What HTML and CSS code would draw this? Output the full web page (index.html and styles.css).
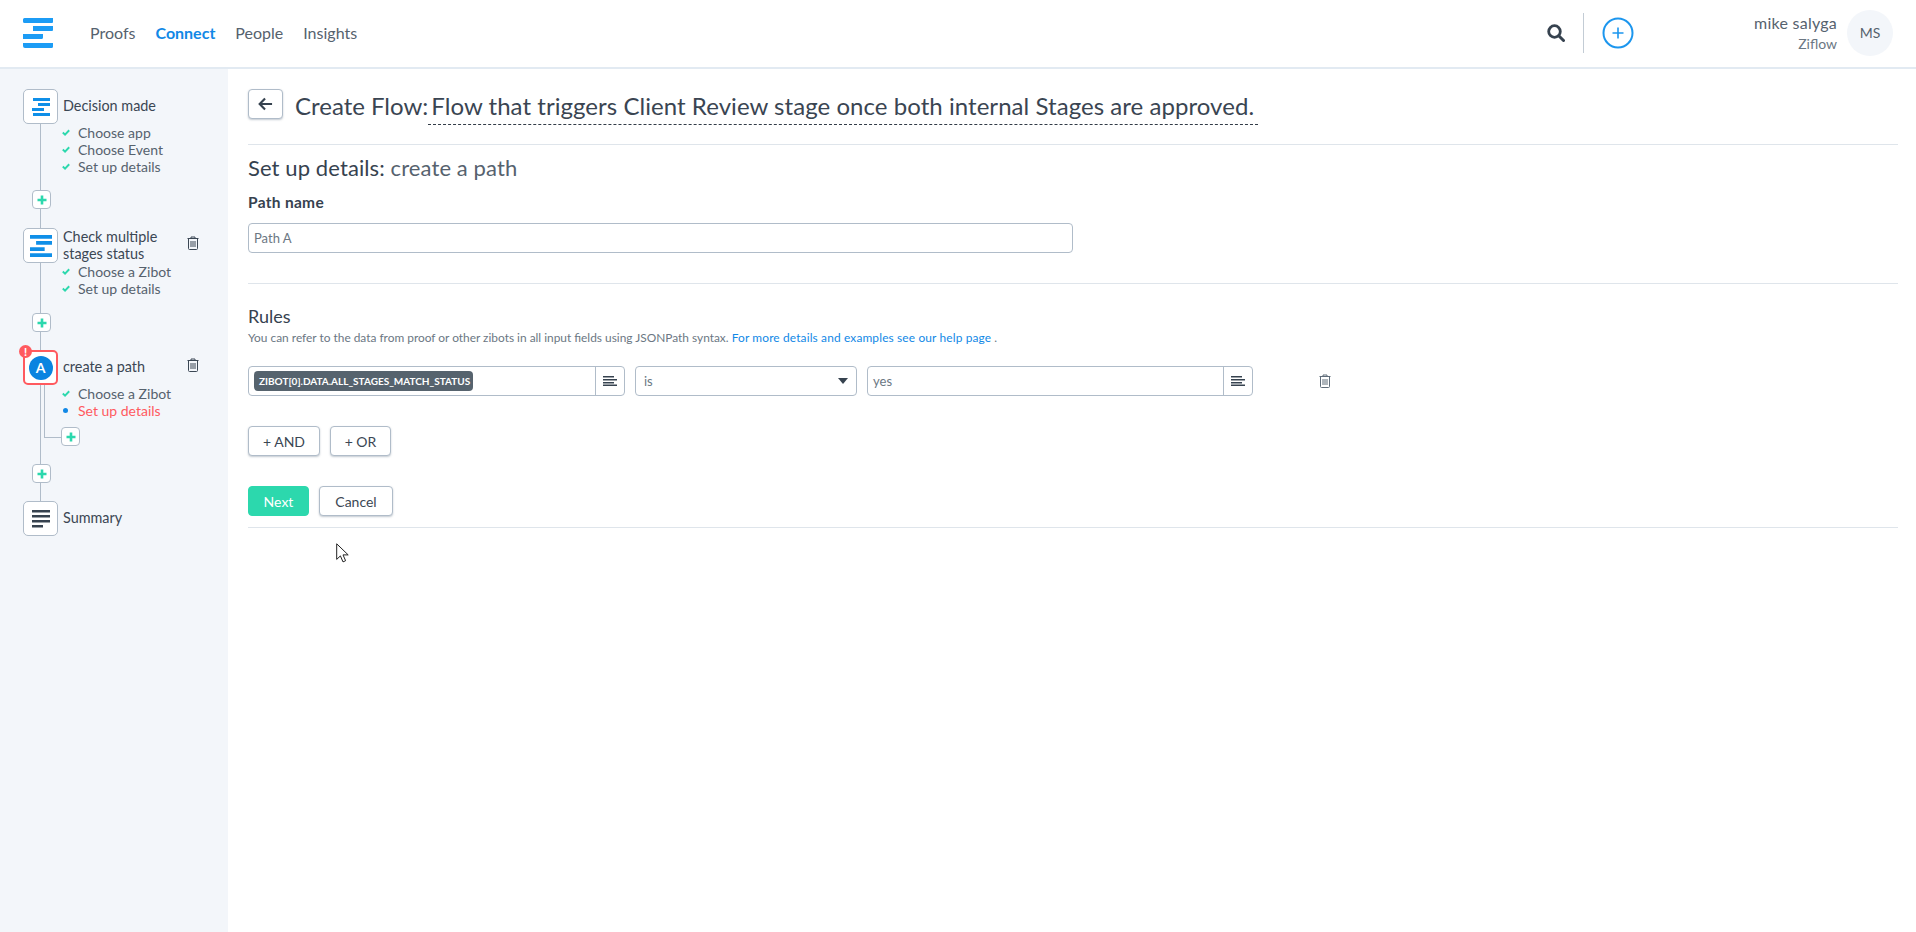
FILE: index.html
```html
<!DOCTYPE html>
<html lang="en">
<head>
<meta charset="utf-8">
<title>Create Flow</title>
<link rel="stylesheet" href="styles.css">
</head>
<body>
<header class="topbar">
  <svg class="logo" viewBox="0 0 30 30" aria-label="Ziflow"><path d="M0 1.500A1.500 1.500 0 0 1 1.500 0H30v4a1 1 0 0 1-1 1H1.500A1.500 1.500 0 0 1 0 3.500zM10 8h20v4a1 1 0 0 1-1 1H10zM0 16h20v3.500a1.500 1.500 0 0 1-1.500 1.500H0zM0 25h30v3.500a1.500 1.500 0 0 1-1.500 1.500H2a2 2 0 0 1-2-2z" fill="#1c9cf5"/></svg>
  <nav class="nav">
    <a class="nav-link">Proofs</a>
    <a class="nav-link active">Connect</a>
    <a class="nav-link">People</a>
    <a class="nav-link">Insights</a>
  </nav>
  <div class="top-actions">
    <svg class="search" viewBox="0 0 18 18"><circle cx="7.500" cy="7.500" r="5.800" fill="none" stroke="#36424f" stroke-width="2.800"/><path d="M12 12l4.500 4.500" stroke="#36424f" stroke-width="3" stroke-linecap="round"/></svg>
    <span class="vsep"></span>
    <svg class="add-circle" viewBox="0 0 32 32"><circle cx="16" cy="16" r="14.500" fill="none" stroke="#1c96ee" stroke-width="2"/><path d="M16 10.500v11M10.500 16h11" stroke="#1c96ee" stroke-width="1.600"/></svg>
    <div class="user">
      <div class="user-name">mike salyga</div>
      <div class="user-org">Ziflow</div>
    </div>
    <div class="avatar">MS</div>
  </div>
</header>

<div class="page">
  <aside class="sidebar">
    <div class="flow">
      <section class="step">
        <div class="step-head">
          <span class="node"><svg class="node-logo" viewBox="0 0 18 18"><path d="M1 0h17v3H1zM6 5h12v3H6zM0 10h12v3H0zM1 15h17v3H1z" fill="#0f8fe8"/></svg></span>
          <span class="step-title">Decision made</span>
        </div>
        <ul class="subs">
          <li class="sub"><svg class="check" viewBox="0 0 10 8"><path d="M1 4l2.800 2.600L9 1.200" fill="none" stroke="#2cd8ad" stroke-width="2.400"/></svg>Choose app</li>
          <li class="sub"><svg class="check" viewBox="0 0 10 8"><path d="M1 4l2.800 2.600L9 1.200" fill="none" stroke="#2cd8ad" stroke-width="2.400"/></svg>Choose Event</li>
          <li class="sub"><svg class="check" viewBox="0 0 10 8"><path d="M1 4l2.800 2.600L9 1.200" fill="none" stroke="#2cd8ad" stroke-width="2.400"/></svg>Set up details</li>
        </ul>
      </section>
      <span class="plus plus-first"><svg viewBox="0 0 10 10"><path d="M5 .5v9M.5 5h9" stroke="#2cd8ad" stroke-width="2.600"/></svg></span>

      <section class="step">
        <div class="step-head">
          <span class="node"><svg class="node-logo wide" viewBox="0 0 18 18"><path d="M0 0h18v3H0zM5 5h13v3H5zM0 10h12v3H0zM0 15h18v3H0z" fill="#0f8fe8"/></svg></span>
          <span class="step-title two-line">Check multiple stages status</span>
          <svg class="trash" viewBox="0 0 12 14"><path d="M4 2V1h4v1M.5 2.500h11M1.500 2.500v10a1 1 0 0 0 1 1h7a1 1 0 0 0 1-1v-10M4 5v6M6 5v6M8 5v6" fill="none" stroke="#3b4754" stroke-width="1"/></svg>
        </div>
        <ul class="subs">
          <li class="sub"><svg class="check" viewBox="0 0 10 8"><path d="M1 4l2.800 2.600L9 1.200" fill="none" stroke="#2cd8ad" stroke-width="2.400"/></svg>Choose a Zibot</li>
          <li class="sub"><svg class="check" viewBox="0 0 10 8"><path d="M1 4l2.800 2.600L9 1.200" fill="none" stroke="#2cd8ad" stroke-width="2.400"/></svg>Set up details</li>
        </ul>
      </section>
      <span class="plus"><svg viewBox="0 0 10 10"><path d="M5 .5v9M.5 5h9" stroke="#2cd8ad" stroke-width="2.600"/></svg></span>

      <section class="step">
        <div class="step-head">
          <span class="node node-error"><span class="path-badge">A</span><span class="alert">!</span></span>
          <span class="step-title">create a path</span>
          <svg class="trash" viewBox="0 0 12 14"><path d="M4 2V1h4v1M.5 2.500h11M1.500 2.500v10a1 1 0 0 0 1 1h7a1 1 0 0 0 1-1v-10M4 5v6M6 5v6M8 5v6" fill="none" stroke="#3b4754" stroke-width="1"/></svg>
        </div>
        <ul class="subs">
          <li class="sub"><svg class="check" viewBox="0 0 10 8"><path d="M1 4l2.800 2.600L9 1.200" fill="none" stroke="#2cd8ad" stroke-width="2.400"/></svg>Choose a Zibot</li>
          <li class="sub sub-error"><span class="dot"></span>Set up details</li>
        </ul>
        <span class="plus plus-branch"><svg viewBox="0 0 10 10"><path d="M5 .5v9M.5 5h9" stroke="#2cd8ad" stroke-width="2.600"/></svg></span>
      </section>
      <span class="plus plus-last"><svg viewBox="0 0 10 10"><path d="M5 .5v9M.5 5h9" stroke="#2cd8ad" stroke-width="2.600"/></svg></span>

      <section class="step">
        <div class="step-head">
          <span class="node"><svg class="node-logo" viewBox="0 0 18 18"><path d="M0 0h18v2.500H0zM0 5h18v2.500H0zM0 10h18v2.500H0zM0 15h11v2.500H0z" fill="#36424f"/></svg></span>
          <span class="step-title">Summary</span>
        </div>
      </section>
    </div>
  </aside>

  <main class="main">
    <div class="title-row">
      <button class="back"><svg viewBox="0 0 16 14"><path d="M15 7H2M7.500 1.200L1.800 7l5.700 5.800" fill="none" stroke="#36424f" stroke-width="2.300"/></svg></button>
      <h1 class="title">Create Flow:</h1>
      <div class="flow-name">Flow that triggers Client Review stage once both internal Stages are approved.</div>
    </div>
    <div class="section section-path">
      <h2 class="section-title">Set up details: <span class="muted">create a path</span></h2>
      <div class="label">Path name</div>
      <div class="field field-name">Path A</div>
    </div>
    <div class="section section-rules">
      <h3 class="rules-title">Rules</h3>
      <p class="help">You can refer to the data from proof or other zibots in all input fields using JSONPath syntax. <a class="link">For more details and examples see our help page</a> .</p>
      <div class="rule-row">
        <div class="field combo combo-left">
          <span class="combo-value"><span class="chip">ZIBOT[0].DATA.ALL_STAGES_MATCH_STATUS</span></span>
          <span class="combo-btn"><svg viewBox="0 0 14 10"><path d="M0 .75h11M0 3.750h14M0 6.750h11M0 9.250h14" stroke="#36424f" stroke-width="1.500"/></svg></span>
        </div>
        <div class="field select">is<span class="caret"></span></div>
        <div class="field combo combo-right">
          <span class="combo-value">yes</span>
          <span class="combo-btn"><svg viewBox="0 0 14 10"><path d="M0 .75h11M0 3.750h14M0 6.750h11M0 9.250h14" stroke="#36424f" stroke-width="1.500"/></svg></span>
        </div>
        <svg class="trash rule-trash" viewBox="0 0 12 14"><path d="M4 2V1h4v1M.5 2.500h11M1.500 2.500v10a1 1 0 0 0 1 1h7a1 1 0 0 0 1-1v-10M4 5v6M6 5v6M8 5v6" fill="none" stroke="#5f6c79" stroke-width="1"/></svg>
      </div>
      <div class="btn-row logic">
        <button class="btn btn-and">+ AND</button>
        <button class="btn btn-or">+ OR</button>
      </div>
      <div class="btn-row actions">
        <button class="btn btn-next">Next</button>
        <button class="btn btn-cancel">Cancel</button>
      </div>
    </div>
    <svg class="cursor" viewBox="0 0 13 20"><path d="M.7.8v15.600l3.700-3.500 2.600 6 2.600-1.200-2.600-5.800h5.200z" fill="#fff" stroke="#222" stroke-width="1"/></svg>
  </main>
</div>
</body>
</html>
```
FILE: styles.css
```css
* { box-sizing: border-box; }
html, body { margin: 0; height: 100%; }
body {
  font-family: "Lato", "Open Sans", sans-serif;
  color: #3b4754;
  background: #fff;
  overflow: hidden;
  display: flex;
  flex-direction: column;
}
button { font-family: inherit; }

/* Top bar */
.topbar {
  height: 69px;
  flex: none;
  display: flex;
  align-items: center;
  padding: 0 23px 2px 23px;
  border-bottom: 2px solid #e2eaf2;
}
.logo { width: 30px; height: 30px; flex: none; }
.nav { display: flex; gap: 20px; margin-left: 37px; font-size: 16px; }
.nav-link { color: #56626e; }
.nav-link.active { color: #1188e6; font-weight: 700; }
.top-actions { margin-left: auto; display: flex; align-items: center; }
.search { width: 18px; height: 18px; }
.vsep { width: 1px; height: 40px; background: #c3ccd5; margin: 0 18px 0 18px; }
.add-circle { width: 32px; height: 32px; }
.user { width: 203px; text-align: right; margin-right: 10px; padding-top: 2px; }
.user-name { font-size: 16px; line-height: 20px; letter-spacing: .25px; color: #56626e; }
.user-org { font-size: 14px; line-height: 20px; margin-top: 1px; color: #6b7783; }
.avatar {
  width: 46px; height: 46px; border-radius: 50%;
  background: #f3f6fa; color: #56626e;
  font-size: 14px;
  display: flex; align-items: center; justify-content: center;
}

/* Layout */
.page { flex: 1; display: flex; min-height: 0; }
.sidebar { width: 228px; flex: none; background: #f3f6fa; padding: 20px 0 0 23px; }
.main { flex: 1; position: relative; padding: 20px 18px 0 20px; }

/* Flow tree */
.flow { position: relative; display: flex; flex-direction: column; }
.flow::before {
  content: "";
  position: absolute;
  left: 17px; top: 20px;
  width: 1px; height: 400px;
  background: #b0bcc9;
}
.step { position: relative; }
.step-head { display: flex; align-items: center; position: relative; min-height: 35px; }
.node {
  position: relative;
  width: 35px; height: 35px; flex: none;
  background: #fff;
  border: 1px solid #b0bcc9;
  border-radius: 5px;
  display: flex; align-items: center; justify-content: center;
}
.node-logo { width: 18px; height: 18px; }
.node-logo.wide { width: 22px; height: 22px; }
.node-error { border: 2px solid #ff5a5f; }
.path-badge {
  width: 24px; height: 24px; border-radius: 50%;
  background: #0a84e0; color: #fff;
  font-size: 14px; font-weight: 700;
  display: flex; align-items: center; justify-content: center;
}
.alert {
  position: absolute;
  left: -6px; top: -7px;
  width: 13px; height: 13px; border-radius: 50%;
  background: #ff5a5f; color: #fff;
  font-size: 11px; font-weight: 900; line-height: 13px;
  text-align: center;
}
.step-title { margin-left: 5px; padding-bottom: 1px; font-size: 14.400px; line-height: 17.500px; color: #3b4754; }
.two-line { width: 95px; line-height: 17px; }
.trash { width: 12px; height: 14px; flex: none; }
.step-head .trash { position: absolute; left: 164px; top: 8px; }
.subs { list-style: none; margin: 0; padding: 0 0 0 39px; }
.sub { font-size: 14px; line-height: 17px; color: #56626e; display: flex; align-items: center; }
.check { width: 8px; height: 7px; margin-right: 8px; flex: none; }
.dot { width: 5px; height: 5px; border-radius: 50%; background: #1188e6; margin: 0 10px 0 1px; flex: none; }
.sub-error { color: #ff5a5f; }
.plus {
  position: relative;
  width: 19px; height: 19px;
  margin: 16px 0 18px 9px;
  background: #fff;
  border: 1px solid #b0bcc9;
  border-radius: 4px;
  display: flex; align-items: center; justify-content: center;
}
.plus svg { width: 10px; height: 10px; }
.plus-first { margin-top: 15px; margin-bottom: 19px; }
.plus-last { margin-top: 18px; }
.plus-branch { margin: 8px 0 0 38px; }
.plus-branch::before {
  content: "";
  position: absolute;
  left: -18px; top: -43px;
  width: 17px; height: 52px;
  border-left: 1px solid #b0bcc9;
  border-bottom: 1px solid #b0bcc9;
}

/* Main */
.title-row {
  display: flex; align-items: flex-start;
  height: 56px;
  border-bottom: 1px solid #dfe5eb;
}
.back {
  width: 35px; height: 30px; padding: 0;
  background: #fff;
  border: 1px solid #b0bcc9; border-radius: 4px;
  box-shadow: 0 1px 2px rgba(80,100,120,.35);
  display: flex; align-items: center; justify-content: center;
}
.back svg { width: 15px; height: 14px; }
.title {
  margin: 0 0 0 12px;
  font-size: 24px; font-weight: 400; line-height: 34px;
  color: #3a4552;
}
.flow-name {
  padding: 0 4px 0 3px;
  font-size: 24px; line-height: 34px; height: 36px;
  letter-spacing: .05px;
  color: #3a4552;
  border-bottom: 1px dashed #323c47;
}
.section-path { height: 139px; border-bottom: 1px solid #dfe5eb; padding-top: 10px; }
.section-title { margin: 0; font-size: 22px; font-weight: 400; line-height: 26px; letter-spacing: .1px; color: #36424f; }
.muted { color: #56626e; }
.label { margin-top: 11px; font-size: 15.500px; font-weight: 700; line-height: 20px; letter-spacing: .3px; color: #36424f; }
.field {
  height: 30px;
  background: #fff;
  border: 1px solid #b0bcc9; border-radius: 4px;
  font-size: 13px; color: #6b7783;
  display: flex; align-items: center;
}
.field-name { width: 825px; margin-top: 11px; padding-left: 5px; }
.section-rules { padding-top: 19px; border-bottom: 1px solid #dfe5eb; height: 244px; }
.rules-title { margin: 0; font-size: 18px; font-weight: 400; line-height: 26px; color: #36424f; }
.help { margin: 1px 0 0; font-size: 11.900px; line-height: 16px; color: #6b7783; }
.link { color: #1188e6; letter-spacing: .15px; }
.rule-row { display: flex; gap: 10px; margin-top: 20px; align-items: center; position: relative; }
.combo-left { width: 377px; }
.combo-right { width: 386px; }
.select { width: 222px; padding: 0 8px; position: relative; justify-content: flex-start; }
.caret {
  margin-left: auto;
  border-left: 5.500px solid transparent;
  border-right: 5.500px solid transparent;
  border-top: 6px solid #36424f;
}
.combo-value { flex: 1; padding-left: 5px; display: flex; align-items: center; }
.combo-btn {
  width: 29px; height: 100%;
  border-left: 1px solid #b0bcc9;
  display: flex; align-items: center; justify-content: center;
}
.combo-btn svg { width: 14px; height: 10px; }
.chip {
  height: 20px; width: 219px;
  background: #56636e; color: #fff;
  border-radius: 4px;
  font-size: 10px; font-weight: 700; line-height: 20px;
  padding-left: 5px;
  white-space: nowrap;
}
.rule-trash { margin-left: 56px; }
.btn-row { display: flex; gap: 10px; }
.logic { margin-top: 30px; }
.actions { margin-top: 30px; }
.btn {
  height: 30px; padding: 0;
  background: #fff;
  border: 1px solid #b0bcc9; border-radius: 4px;
  box-shadow: 0 1px 2px rgba(80,100,120,.35);
  font-size: 14px; color: #3b4754;
}
.btn-and { width: 72px; }
.btn-or { width: 61px; }
.btn-next { width: 61px; background: #2cd8ad; border-color: #2cd8ad; color: #fff; box-shadow: none; }
.btn-cancel { width: 74px; }
.cursor { position: absolute; left: 108px; top: 474px; width: 13px; height: 20px; }
```
